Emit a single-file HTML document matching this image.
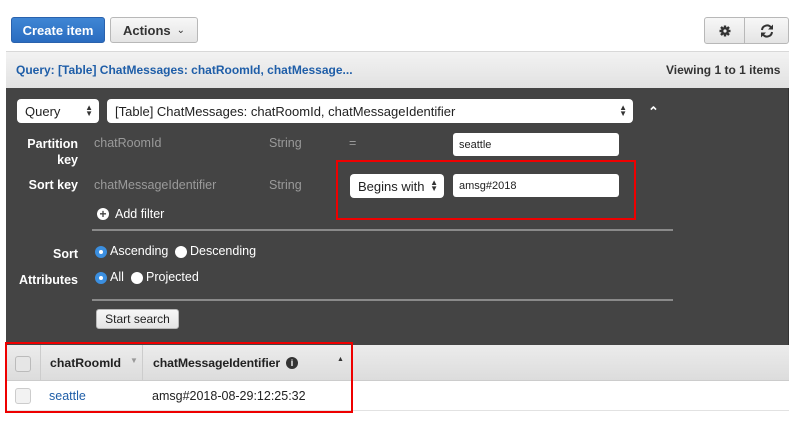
<!DOCTYPE html>
<html><head><style>
*{box-sizing:border-box;margin:0;padding:0}
body{width:800px;height:433px;background:#fff;font-family:"Liberation Sans",Arial,sans-serif;position:relative;overflow:hidden;font-size:12px}
.a{position:absolute}
.btn{position:absolute;border:1px solid #b8b8b8;border-radius:3px;background:linear-gradient(#f7f7f7,#e4e4e4);color:#333;font-weight:bold;font-size:13px;display:flex;align-items:center;justify-content:center}
.lbl{position:absolute;color:#fff;font-weight:bold;font-size:12.5px;text-align:right}
.gray{position:absolute;color:#9a9a9a;font-size:12.5px}
.inp{position:absolute;background:#fff;border-radius:3px;font-size:11px;color:#222;padding-left:6px;display:flex;align-items:center}
.sel{position:absolute;background:#fff;border-radius:4px;font-size:13px;color:#222;padding-left:8px;display:flex;align-items:center}
.arr{position:absolute;right:6px;top:50%;transform:translateY(-50%);font-size:8px;line-height:6px;color:#333;text-align:center}
.hr{position:absolute;height:2px;background:#8a8a8a;left:92px;width:581px}
.radio{position:absolute;width:12px;height:12px;border-radius:50%;background:#fff}
.radio.on{background:#3b8fe0}
.radio.on::after{content:"";position:absolute;left:4px;top:4px;width:4px;height:4px;border-radius:50%;background:#fff}
.rt{position:absolute;color:#fff;font-size:12.5px}
</style></head><body>
<div class="btn" style="left:11px;top:17px;width:94px;height:26px;background:linear-gradient(#3f86d4,#2a6cc0);border-color:#2a62ad;color:#fff">Create item</div>
<div class="btn" style="left:110px;top:17px;width:88px;height:26px">Actions <span style="font-weight:normal;font-size:10px;margin-left:6px">&#8964;</span></div>
<div class="btn" style="left:704px;top:17px;width:41px;height:27px;border-radius:3px 0 0 3px"><svg width="12" height="12" viewBox="0 0 12 12"><circle cx="6" cy="6" r="4" fill="#333"/><g stroke="#333" stroke-width="2.4"><line x1="6" y1="0.5" x2="6" y2="11.5"/><line x1="0.5" y1="6" x2="11.5" y2="6"/><line x1="2" y1="2" x2="10" y2="10"/><line x1="10" y1="2" x2="2" y2="10"/></g><circle cx="6" cy="6" r="1.6" fill="#eee"/></svg></div>
<div class="btn" style="left:744px;top:17px;width:45px;height:27px;border-radius:0 3px 3px 0"><svg width="16" height="14" viewBox="0 0 16 14"><path d="M3 6a5 5 0 0 1 9-2.5" stroke="#333" stroke-width="2" fill="none"/><path d="M13 8a5 5 0 0 1-9 2.5" stroke="#333" stroke-width="2" fill="none"/><path d="M14 0.5v5h-5z" fill="#333"/><path d="M2 13.5v-5h5z" fill="#333"/></svg></div>
<div class="a" style="left:6px;top:51px;width:783px;height:37px;background:linear-gradient(#f2f2f2,#e2e2e2);border-top:1px solid #d8d8d8"></div>
<div class="a" style="left:16px;top:63px;color:#1f5ea8;font-weight:bold;font-size:12px">Query: [Table] ChatMessages: chatRoomId, chatMessage...</div>
<div class="a" style="left:666px;top:63px;color:#333;font-weight:bold;font-size:12px">Viewing 1 to 1 items</div>
<div class="a" style="left:6px;top:88px;width:783px;height:257px;background:#444;border-right:1px solid #333"></div>
<div class="sel" style="left:17px;top:99px;width:82px;height:24px">Query<div class="arr">▲<br>▼</div></div>
<div class="sel" style="left:107px;top:99px;width:526px;height:24px">[Table] ChatMessages: chatRoomId, chatMessageIdentifier<div class="arr">▲<br>▼</div></div>
<div class="a" style="left:648px;top:104px;color:#fff;font-size:13px;font-weight:bold">&#8963;</div>
<div class="lbl" style="left:10px;top:136px;width:68px;line-height:16px">Partition<br>key</div>
<div class="gray" style="left:94px;top:136px">chatRoomId</div>
<div class="gray" style="left:269px;top:136px">String</div>
<div class="gray" style="left:349px;top:136px">=</div>
<div class="inp" style="left:453px;top:133px;width:166px;height:23px">seattle</div>
<div class="lbl" style="left:10px;top:178px;width:68px">Sort key</div>
<div class="gray" style="left:94px;top:178px">chatMessageIdentifier</div>
<div class="gray" style="left:269px;top:178px">String</div>
<div class="sel" style="left:350px;top:174px;width:94px;height:24px">Begins with<div class="arr">▲<br>▼</div></div>
<div class="inp" style="left:453px;top:174px;width:166px;height:23px">amsg#2018</div>
<div class="a" style="left:336px;top:160px;width:300px;height:60px;border:2px solid #e00"></div>
<div class="a" style="left:97px;top:208px;width:12px;height:12px;border-radius:50%;background:#fff;color:#444;font-size:12px;font-weight:bold;line-height:12px;text-align:center">+</div>
<div class="rt" style="left:115px;top:207px">Add filter</div>
<div class="hr" style="top:229px"></div>
<div class="lbl" style="left:10px;top:247px;width:68px">Sort</div>
<div class="radio on" style="left:95px;top:246px"></div><div class="rt" style="left:110px;top:244px">Ascending</div>
<div class="radio" style="left:175px;top:246px"></div><div class="rt" style="left:190px;top:244px">Descending</div>
<div class="lbl" style="left:10px;top:273px;width:68px">Attributes</div>
<div class="radio on" style="left:95px;top:272px"></div><div class="rt" style="left:110px;top:270px">All</div>
<div class="radio" style="left:131px;top:272px"></div><div class="rt" style="left:146px;top:270px">Projected</div>
<div class="hr" style="top:299px"></div>
<div class="btn" style="left:96px;top:309px;width:83px;height:20px;font-weight:normal;font-size:12px;color:#222">Start search</div>
<div class="a" style="left:6px;top:345px;width:783px;height:36px;background:linear-gradient(#ececec,#dcdcdc);border-bottom:1px solid #ccc"></div>
<div class="a" style="left:40px;top:345px;width:1px;height:36px;background:#ccc"></div>
<div class="a" style="left:142px;top:345px;width:1px;height:36px;background:#ccc"></div>
<div class="a" style="left:15px;top:356px;width:16px;height:16px;border:1px solid #bbb;border-radius:3px;background:#e6e6e6"></div>
<div class="a" style="left:50px;top:356px;font-weight:bold;font-size:12.3px;color:#222">chatRoomId</div>
<div class="a" style="left:130px;top:356px;font-size:8px;color:#999">▼</div>
<div class="a" style="left:153px;top:356px;font-weight:bold;font-size:12.3px;color:#222;letter-spacing:-0.1px">chatMessageIdentifier</div>
<div class="a" style="left:286px;top:357px;width:12px;height:12px;border-radius:50%;background:#333;color:#fff;font-size:9px;font-weight:bold;text-align:center;line-height:12px">i</div>
<div class="a" style="left:337px;top:356px;font-size:7px;color:#333">▲</div>
<div class="a" style="left:6px;top:410px;width:783px;height:1px;background:#e2e2e2"></div>
<div class="a" style="left:15px;top:388px;width:16px;height:16px;border:1px solid #ccc;border-radius:3px;background:#f2f2f2"></div>
<div class="a" style="left:49px;top:389px;color:#1f5ea8;font-size:12.5px">seattle</div>
<div class="a" style="left:152px;top:389px;color:#222;font-size:12.5px">amsg#2018-08-29:12:25:32</div>
<div class="a" style="left:5px;top:342px;width:348px;height:71px;border:2px solid #e00"></div>
</body></html>
